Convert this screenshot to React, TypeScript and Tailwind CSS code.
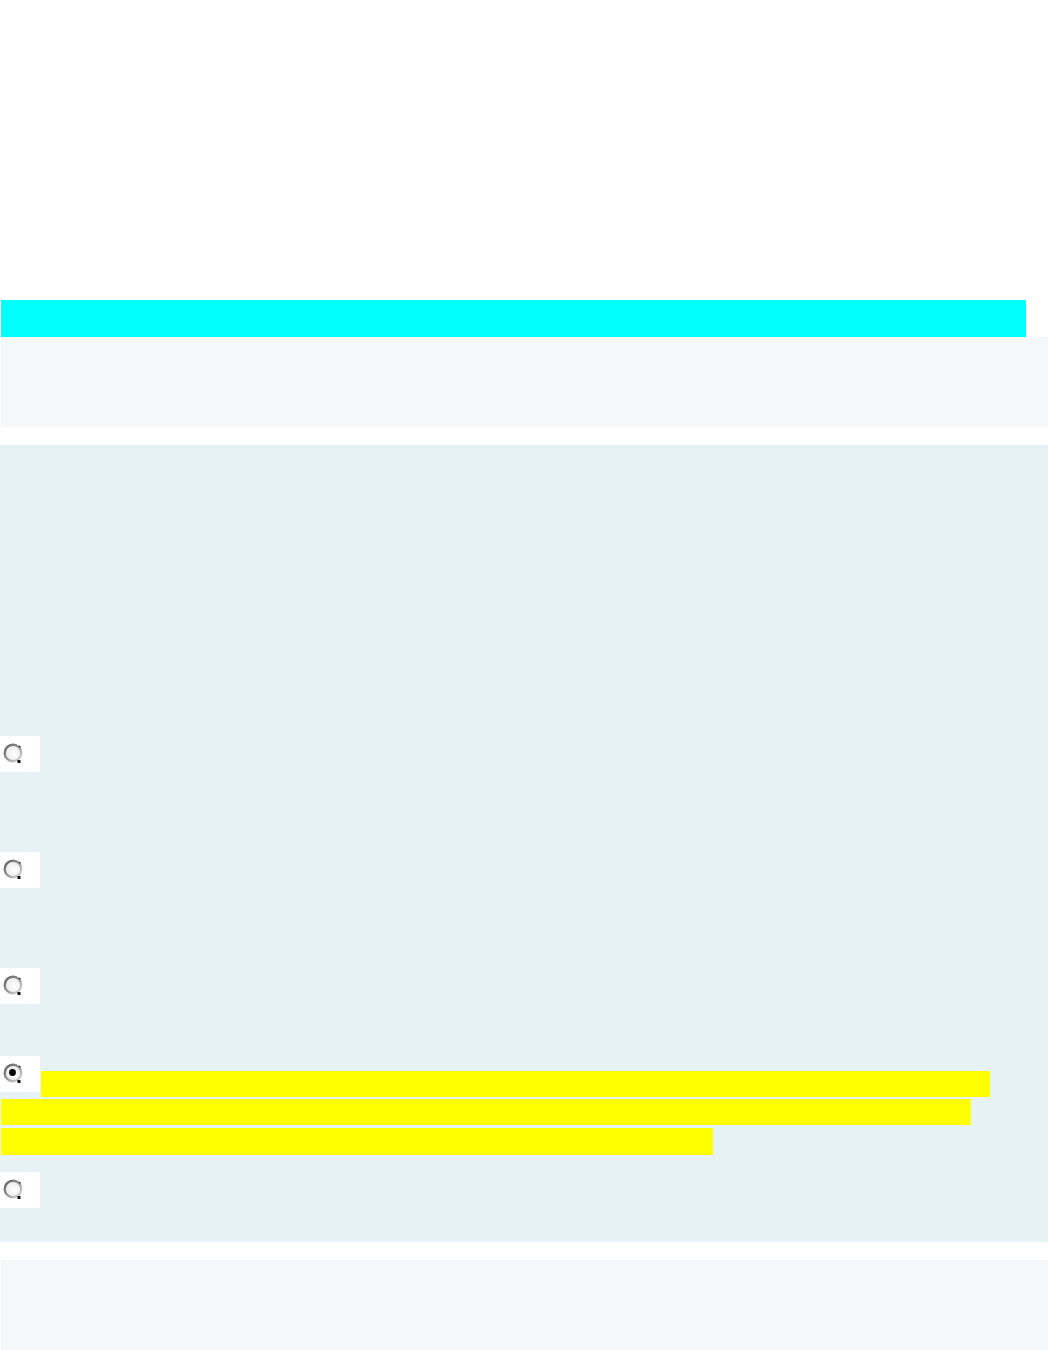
import React from "react";

function Radio({ checked }: { checked?: boolean }) {
  return (
    <div className="w-[40px] h-[36px] bg-white shrink-0 pl-[3px] pt-[7px]">
      <svg width="20" height="20" viewBox="0 0 20 20">
        <defs>
          <linearGradient id={checked ? "rg1" : "rg0"} x1="0" y1="0" x2="1" y2="1">
            <stop offset="0" stopColor="#5a5a5a" />
            <stop offset="0.55" stopColor="#a0a0a0" />
            <stop offset="1" stopColor="#e0e0e0" />
          </linearGradient>
          <radialGradient id={checked ? "rf1" : "rf0"} cx="0.55" cy="0.55" r="0.6">
            <stop offset="0" stopColor="#ffffff" />
            <stop offset="1" stopColor="#e8e8e8" />
          </radialGradient>
        </defs>
        <circle
          cx="10"
          cy="10"
          r="8.3"
          fill={`url(#${checked ? "rf1" : "rf0"})`}
          stroke={`url(#${checked ? "rg1" : "rg0"})`}
          strokeWidth="2.4"
        />
        <path d="M16 3 L17.5 4.5" stroke="#444" strokeWidth="1.6" />
        <rect x="14.5" y="17" width="3" height="3" fill="#111" />
        {checked && <circle cx="9.5" cy="9.5" r="3.4" fill="#000" />}
      </svg>
    </div>
  );
}

export default function App() {
  return (
    <div
      className="min-h-[1350px] bg-white pt-[300px]"
      style={{ fontFamily: '"Liberation Sans", Arial, sans-serif' }}
    >
      <div className="ml-[1px] w-[1025px] h-[37px] bg-[#00ffff]" />
      <div className="ml-[1px] w-[1047px] h-[90px] bg-[#f7f8fa]" />
      <div className="mt-[18px] w-[1048px] bg-[#e6f2f4] pt-[291px] pb-0">
        <div className="h-[116px]">
          <Radio />
        </div>
        <div className="h-[116px]">
          <Radio />
        </div>
        <div className="h-[88px]">
          <Radio />
        </div>
        <div className="h-[116px]">
          <div className="flex items-start">
            <Radio checked />
            <span className="mt-[15px] ml-[1px] w-[949px] h-[26px] bg-[#ffff00]" />
          </div>
          <div className="mt-[2px] ml-[1px] w-[970px] h-[26px] bg-[#ffff00]" />
          <div className="mt-[3px] ml-[1px] w-[712px] h-[27px] bg-[#ffff00]" />
        </div>
        <div className="h-[70px]">
          <Radio />
        </div>
      </div>
      <div className="mt-[18px] ml-[1px] w-[1047px] h-[90px] bg-[#f7f8fa]" />
    </div>
  );
}
